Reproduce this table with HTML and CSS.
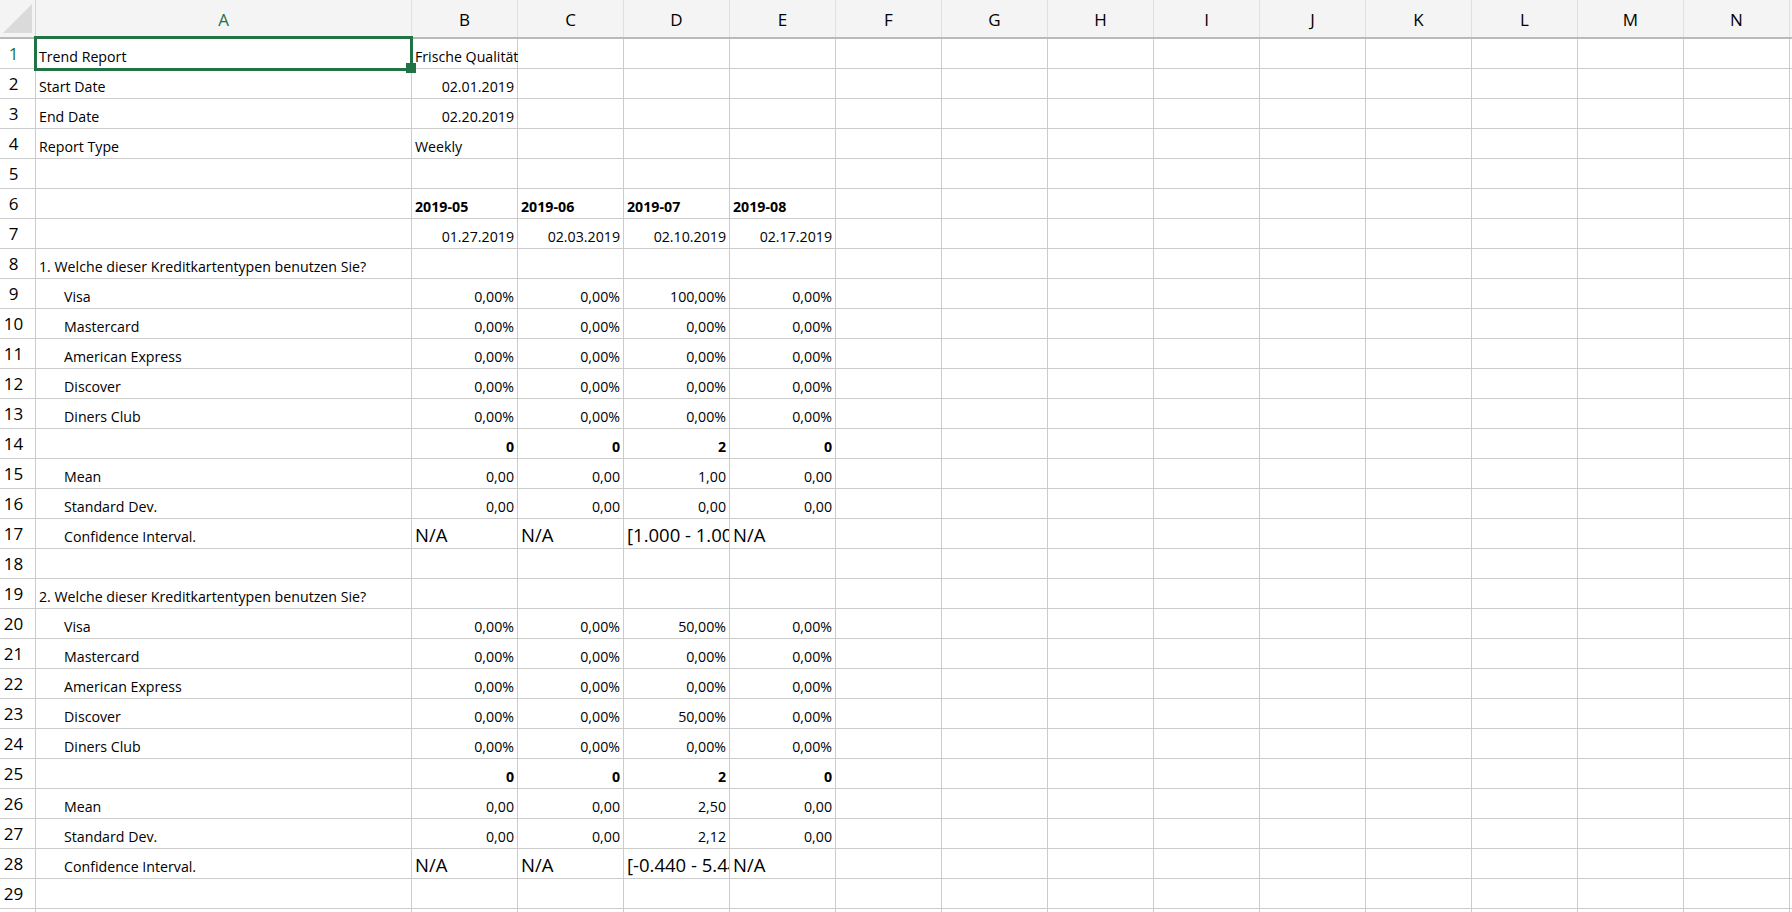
FILE: index.html
```html
<!DOCTYPE html>
<html>
<head>
<meta charset="utf-8">
<title>Trend Report</title>
<link rel="stylesheet" href="styles.css">
</head>
<body>
<div class="sheet">
  <div class="colhead">
    <div class="corner"><span class="tri"></span></div>
    <div class="ch sel">A</div><div class="ch">B</div><div class="ch">C</div><div class="ch">D</div><div class="ch">E</div>
    <div class="ch">F</div><div class="ch">G</div><div class="ch">H</div><div class="ch">I</div><div class="ch">J</div>
    <div class="ch">K</div><div class="ch">L</div><div class="ch">M</div><div class="ch">N</div>
  </div>

  <div class="row"><div class="rh sel">1</div><div class="c active">Trend Report</div><div class="c spill">Frische Qualität</div><div class="c"></div><div class="c"></div><div class="c"></div><div class="fill"></div></div>
  <div class="row"><div class="rh">2</div><div class="c">Start Date</div><div class="c r">02.01.2019</div><div class="c"></div><div class="c"></div><div class="c"></div><div class="fill"></div></div>
  <div class="row"><div class="rh">3</div><div class="c">End Date</div><div class="c r">02.20.2019</div><div class="c"></div><div class="c"></div><div class="c"></div><div class="fill"></div></div>
  <div class="row"><div class="rh">4</div><div class="c">Report Type</div><div class="c">Weekly</div><div class="c"></div><div class="c"></div><div class="c"></div><div class="fill"></div></div>
  <div class="row"><div class="rh">5</div><div class="c"></div><div class="c"></div><div class="c"></div><div class="c"></div><div class="c"></div><div class="fill"></div></div>
  <div class="row"><div class="rh">6</div><div class="c"></div><div class="c b">2019-05</div><div class="c b">2019-06</div><div class="c b">2019-07</div><div class="c b">2019-08</div><div class="fill"></div></div>
  <div class="row"><div class="rh">7</div><div class="c"></div><div class="c r">01.27.2019</div><div class="c r">02.03.2019</div><div class="c r">02.10.2019</div><div class="c r">02.17.2019</div><div class="fill"></div></div>
  <div class="row"><div class="rh">8</div><div class="c">1. Welche dieser Kreditkartentypen benutzen Sie?</div><div class="c"></div><div class="c"></div><div class="c"></div><div class="c"></div><div class="fill"></div></div>
  <div class="row"><div class="rh">9</div><div class="c ind">Visa</div><div class="c r">0,00%</div><div class="c r">0,00%</div><div class="c r">100,00%</div><div class="c r">0,00%</div><div class="fill"></div></div>
  <div class="row"><div class="rh">10</div><div class="c ind">Mastercard</div><div class="c r">0,00%</div><div class="c r">0,00%</div><div class="c r">0,00%</div><div class="c r">0,00%</div><div class="fill"></div></div>
  <div class="row"><div class="rh">11</div><div class="c ind">American Express</div><div class="c r">0,00%</div><div class="c r">0,00%</div><div class="c r">0,00%</div><div class="c r">0,00%</div><div class="fill"></div></div>
  <div class="row"><div class="rh">12</div><div class="c ind">Discover</div><div class="c r">0,00%</div><div class="c r">0,00%</div><div class="c r">0,00%</div><div class="c r">0,00%</div><div class="fill"></div></div>
  <div class="row"><div class="rh">13</div><div class="c ind">Diners Club</div><div class="c r">0,00%</div><div class="c r">0,00%</div><div class="c r">0,00%</div><div class="c r">0,00%</div><div class="fill"></div></div>
  <div class="row"><div class="rh">14</div><div class="c"></div><div class="c r b">0</div><div class="c r b">0</div><div class="c r b">2</div><div class="c r b">0</div><div class="fill"></div></div>
  <div class="row"><div class="rh">15</div><div class="c ind">Mean</div><div class="c r">0,00</div><div class="c r">0,00</div><div class="c r">1,00</div><div class="c r">0,00</div><div class="fill"></div></div>
  <div class="row"><div class="rh">16</div><div class="c ind">Standard Dev.</div><div class="c r">0,00</div><div class="c r">0,00</div><div class="c r">0,00</div><div class="c r">0,00</div><div class="fill"></div></div>
  <div class="row"><div class="rh">17</div><div class="c ind">Confidence Interval.</div><div class="c big">N/A</div><div class="c big">N/A</div><div class="c big">[1.000 - 1.000]</div><div class="c big">N/A</div><div class="fill"></div></div>
  <div class="row"><div class="rh">18</div><div class="c"></div><div class="c"></div><div class="c"></div><div class="c"></div><div class="c"></div><div class="fill"></div></div>
  <div class="row"><div class="rh">19</div><div class="c">2. Welche dieser Kreditkartentypen benutzen Sie?</div><div class="c"></div><div class="c"></div><div class="c"></div><div class="c"></div><div class="fill"></div></div>
  <div class="row"><div class="rh">20</div><div class="c ind">Visa</div><div class="c r">0,00%</div><div class="c r">0,00%</div><div class="c r">50,00%</div><div class="c r">0,00%</div><div class="fill"></div></div>
  <div class="row"><div class="rh">21</div><div class="c ind">Mastercard</div><div class="c r">0,00%</div><div class="c r">0,00%</div><div class="c r">0,00%</div><div class="c r">0,00%</div><div class="fill"></div></div>
  <div class="row"><div class="rh">22</div><div class="c ind">American Express</div><div class="c r">0,00%</div><div class="c r">0,00%</div><div class="c r">0,00%</div><div class="c r">0,00%</div><div class="fill"></div></div>
  <div class="row"><div class="rh">23</div><div class="c ind">Discover</div><div class="c r">0,00%</div><div class="c r">0,00%</div><div class="c r">50,00%</div><div class="c r">0,00%</div><div class="fill"></div></div>
  <div class="row"><div class="rh">24</div><div class="c ind">Diners Club</div><div class="c r">0,00%</div><div class="c r">0,00%</div><div class="c r">0,00%</div><div class="c r">0,00%</div><div class="fill"></div></div>
  <div class="row"><div class="rh">25</div><div class="c"></div><div class="c r b">0</div><div class="c r b">0</div><div class="c r b">2</div><div class="c r b">0</div><div class="fill"></div></div>
  <div class="row"><div class="rh">26</div><div class="c ind">Mean</div><div class="c r">0,00</div><div class="c r">0,00</div><div class="c r">2,50</div><div class="c r">0,00</div><div class="fill"></div></div>
  <div class="row"><div class="rh">27</div><div class="c ind">Standard Dev.</div><div class="c r">0,00</div><div class="c r">0,00</div><div class="c r">2,12</div><div class="c r">0,00</div><div class="fill"></div></div>
  <div class="row"><div class="rh">28</div><div class="c ind">Confidence Interval.</div><div class="c big">N/A</div><div class="c big">N/A</div><div class="c big">[-0.440 - 5.440]</div><div class="c big">N/A</div><div class="fill"></div></div>
  <div class="row"><div class="rh">29</div><div class="c"></div><div class="c"></div><div class="c"></div><div class="c"></div><div class="c"></div><div class="fill"></div></div>
  <div class="row"><div class="rh"></div><div class="c"></div><div class="c"></div><div class="c"></div><div class="c"></div><div class="c"></div><div class="fill"></div></div>
</div>
</body>
</html>
```

FILE: styles.css
```css
html, body {
  margin: 0;
  padding: 0;
  background: #ffffff;
  overflow: hidden;
  height: 912px;
}

.sheet {
  width: 1792px;
  font-family: "Open Sans", "Liberation Sans", sans-serif;
  color: #000;
}

.colhead {
  display: grid;
  grid-template-columns: 36px 376px repeat(13, 106px) 1fr;
  height: 39px;
  box-sizing: border-box;
  background: #f4f4f4;
  border-bottom: 2px solid #bababa;
}

.corner {
  position: relative;
  border-right: 1px solid #d6d6d6;
}

.tri {
  position: absolute;
  left: 3px;
  top: 4px;
  width: 0;
  height: 0;
  border-left: 29px solid transparent;
  border-bottom: 29px solid #dadada;
}

.ch {
  display: flex;
  align-items: center;
  justify-content: center;
  font-size: 17px;
  border-right: 1px solid #e0e0e0;
  padding-top: 1px;
}

.ch.sel {
  color: #217346;
}

.row {
  display: grid;
  grid-template-columns: 36px 376px repeat(4, 106px) 1fr;
  height: 30px;
}

.rh {
  display: flex;
  align-items: flex-end;
  justify-content: center;
  padding-right: 8px;
  padding-bottom: 4px;
  font-size: 17px;
  line-height: 20px;
  border-right: 1px solid #cccccc;
  border-bottom: 1px solid #cccccc;
}

.rh.sel {
  color: #217346;
}

.c {
  display: flex;
  align-items: flex-end;
  justify-content: flex-start;
  padding: 0 3px 3px 3px;
  font-size: 14.2px;
  line-height: 17px;
  white-space: nowrap;
  overflow: hidden;
  border-right: 1px solid #cccccc;
  border-bottom: 1px solid #cccccc;
}

.c.spill {
  overflow: visible;
}

.c.r {
  justify-content: flex-end;
}

.c.b {
  font-weight: 700;
}

.c.ind {
  padding-left: 28px;
}

.c.big {
  font-size: 18.5px;
  line-height: 22px;
  padding-bottom: 2px;
}

.c.active {
  position: relative;
  overflow: visible;
}

.c.active::before {
  content: "";
  position: absolute;
  left: -2px;
  top: -3px;
  width: 379px;
  height: 35px;
  box-sizing: border-box;
  border: 3px solid #217346;
  z-index: 2;
}

.c.active::after {
  content: "";
  position: absolute;
  left: 370px;
  top: 24px;
  width: 10px;
  height: 10px;
  background: #217346;
  z-index: 3;
}

.fill {
  border-bottom: 1px solid #cccccc;
  background: repeating-linear-gradient(to right, transparent 0, transparent 105px, #cccccc 105px, #cccccc 106px);
}
```
